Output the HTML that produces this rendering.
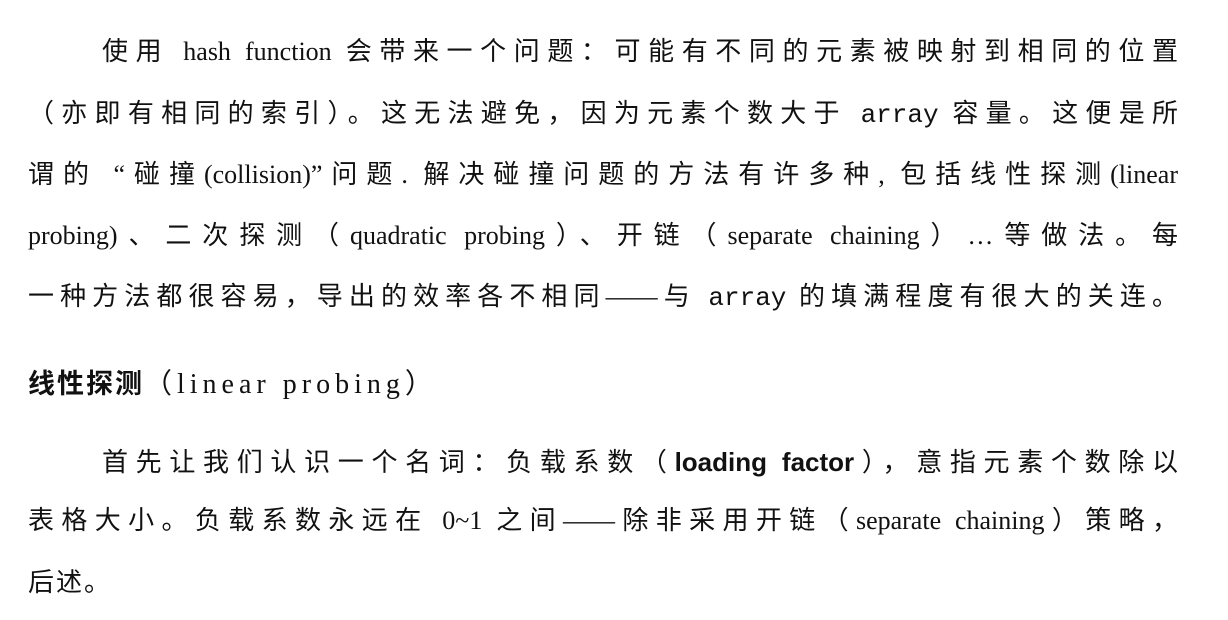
<!DOCTYPE html>
<html><head><meta charset="utf-8"><style>
body{margin:0;background:#fff;width:1228px;height:620px;overflow:hidden;position:relative;}
.l{position:absolute;height:36px;line-height:36px;font-size:26px;color:#111;font-family:"Liberation Serif","Noto Sans CJK SC",serif;text-align:justify;text-align-last:justify;white-space:nowrap;}
.m{font-family:"Liberation Mono",monospace;}
.h{font-family:"Liberation Sans","Noto Sans CJK SC",sans-serif;font-weight:bold;}
</style></head><body>
<div class="l" style="left:102px;width:1076px;top:34px">使用 hash function 会带来一个问题：可能有不同的元素被映射到相同的位置</div>
<div class="l" style="left:28px;width:1150px;top:96px">（亦即有相同的索引）。这无法避免，因为元素个数大于 <span class="m">array</span> 容量。这便是所</div>
<div class="l" style="left:28px;width:1150px;top:157px">谓的 “碰撞(collision)”问题. 解决碰撞问题的方法有许多种, 包括线性探测(linear</div>
<div class="l" style="left:28px;width:1150px;top:218px">probing)、二次探测（quadratic probing）、开链（separate chaining）…等做法。每</div>
<div class="l" style="left:28px;width:1150px;top:279px">一种方法都很容易，导出的效率各不相同——与 <span class="m">array</span> 的填满程度有很大的关连。</div>
<div class="l" style="left:28px;top:366px;text-align:left;text-align-last:left;font-size:27px"><span style="font-family:'Liberation Sans','Noto Sans CJK SC',sans-serif;font-weight:bold;letter-spacing:2px">线性探测</span><span style="letter-spacing:5px;font-size:28px">（linear probing）</span></div>
<div class="l" style="left:102px;width:1076px;top:444px">首先让我们认识一个名词：负载系数（<span class="h">loading factor</span>），意指元素个数除以</div>
<div class="l" style="left:28px;width:1150px;top:503px">表格大小。负载系数永远在 0~1 之间——除非采用开链（separate chaining）策略，</div>
<div class="l" style="left:28px;top:565px;text-align:left;text-align-last:left;letter-spacing:2px">后述。</div>
</body></html>
